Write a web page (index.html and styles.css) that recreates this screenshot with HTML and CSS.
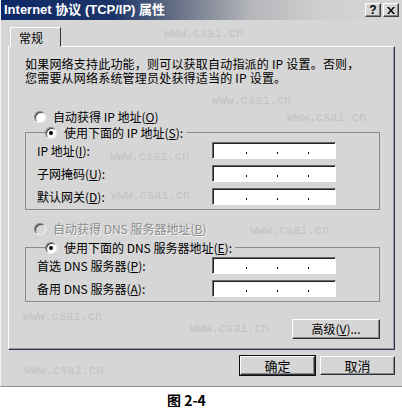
FILE: index.html
```html
<!DOCTYPE html>
<html lang="zh-CN">
<head>
    <meta charset="UTF-8">
    <title>Internet 协议 (TCP/IP) 属性</title>
    <link rel="stylesheet" href="styles.css">
</head>
<body>
    <div class="dialog">
        <div class="titlebar">
            <span class="title">Internet 协议 (TCP/IP) 属性</span>
            <div class="title-btns">
                <span class="title-btn">?</span>
                <span class="title-btn">
                    <svg width="8" height="7" viewBox="0 0 8 7"><path d="M0 0h2l2 2.5L6 0h2L5 3.5 8 7H6L4 4.5 2 7H0l3-3.5z" fill="#000"/></svg>
                </span>
            </div>
        </div>

        <div class="tabs">
            <div class="tab">常规</div>
        </div>

        <div class="panel">
            <div class="intro">
                <div>如果网络支持此功能，则可以获取自动指派的 IP 设置。否则，</div>
                <div>您需要从网络系统管理员处获得适当的 IP 设置。</div>
            </div>

            <div class="option first">
                <span class="radio"></span>
                <span>自动获得 IP 地址(<u>O</u>)</span>
            </div>

            <fieldset class="group">
                <legend class="option">
                    <span class="radio checked"></span>
                    <span>使用下面的 IP 地址(<u>S</u>):</span>
                </legend>
                <div class="rows">
                    <div class="row">
                        <span class="label">IP 地址(<u>I</u>):</span>
                        <div class="ipbox"><i></i><i></i><i></i></div>
                    </div>
                    <div class="row">
                        <span class="label">子网掩码(<u>U</u>):</span>
                        <div class="ipbox"><i></i><i></i><i></i></div>
                    </div>
                    <div class="row">
                        <span class="label">默认网关(<u>D</u>):</span>
                        <div class="ipbox"><i></i><i></i><i></i></div>
                    </div>
                </div>
            </fieldset>

            <div class="option second disabled">
                <span class="radio"></span>
                <span>自动获得 DNS 服务器地址(<u>B</u>)</span>
            </div>

            <fieldset class="group dns">
                <legend class="option">
                    <span class="radio checked"></span>
                    <span>使用下面的 DNS 服务器地址(<u>E</u>):</span>
                </legend>
                <div class="rows">
                    <div class="row">
                        <span class="label">首选 DNS 服务器(<u>P</u>):</span>
                        <div class="ipbox"><i></i><i></i><i></i></div>
                    </div>
                    <div class="row">
                        <span class="label">备用 DNS 服务器(<u>A</u>):</span>
                        <div class="ipbox"><i></i><i></i><i></i></div>
                    </div>
                </div>
            </fieldset>

            <div class="adv">
                <button class="btn adv-btn">高级(<u>V</u>)...</button>
            </div>
        </div>

        <div class="footer">
            <button class="btn default">确定</button>
            <button class="btn">取消</button>
        </div>

        <!-- watermark from the scanned figure -->
        <span class="mark" style="left:163px;top:27px">www.csai.cn</span>
        <span class="mark" style="left:211px;top:94px">www.csai.cn</span>
        <span class="mark" style="left:286px;top:111px">www.csai.cn</span>
        <span class="mark" style="left:109px;top:150px">www.csai.cn</span>
        <span class="mark" style="left:110px;top:189px">www.csai.cn</span>
        <span class="mark" style="left:249px;top:224px">www.csai.cn</span>
        <span class="mark" style="left:22px;top:310px">www.csai.cn</span>
        <span class="mark" style="left:189px;top:322px">www.csai.cn</span>
        <span class="mark" style="left:23px;top:364px">www.csai.cn</span>
    </div>
    <div class="caption">图 2-4</div>
</body>
</html>
```

FILE: styles.css
```css
body {
    margin: 0;
    background: #fff;
    font-family: "Noto Sans CJK SC", sans-serif;
    font-size: 12px;
    color: #000;
}
.dialog {
    position: relative;
    width: 402px;
    height: 387px;
    box-sizing: border-box;
    background: #d6d6d6;
    border-left: 1px solid #f2f2f2;
    border-bottom: 1px solid #8e8e8e;
}
.titlebar {
    height: 20px;
    display: flex;
    align-items: center;
    justify-content: space-between;
    padding: 0 3px 0 3px;
    background: linear-gradient(90deg, #0c2866 0, #1c3568 28%, #6c7488 45%, #b4b6ba 62%, #cfcfcf 80%, #d6d6d6 100%);
}
.title {
    color: #fff;
    font-family: "Liberation Sans", "Noto Sans CJK SC", sans-serif;
    font-weight: bold;
    font-size: 13px;
    line-height: 16px;
}
.title-btns {
    display: flex;
    gap: 2px;
}
.title-btn {
    width: 16px;
    height: 14px;
    box-sizing: border-box;
    display: flex;
    align-items: center;
    justify-content: center;
    background: #d6d6d6;
    border: 1px solid;
    border-color: #fff #404040 #404040 #fff;
    box-shadow: inset -1px -1px 0 #808080;
    font: bold 12px "Liberation Sans", sans-serif;
    line-height: 12px;
}
.tabs {
    display: flex;
    padding: 7px 0 0 9px;
}
.tab {
    position: relative;
    z-index: 1;
    width: 51px;
    height: 20px;
    box-sizing: border-box;
    margin-bottom: -1px;
    padding: 3px 0 0 8px;
    background: #d6d6d6;
    border: 1px solid;
    border-color: #fff #303040 transparent #fff;
    line-height: 14px;
}
.panel {
    width: 387px;
    margin-left: 7px;
    box-sizing: border-box;
    padding: 10px 14px 10px 16px;
    border: 1px solid;
    border-color: #fff #2a3450 #2a3450 #fff;
    box-shadow: inset -1px -1px 0 #9a9a9a;
}
.intro {
    line-height: 14px;
    letter-spacing: 0.2px;
    white-space: nowrap;
}
.option {
    display: flex;
    align-items: center;
    gap: 7px;
    height: 14px;
    line-height: 14px;
    padding-left: 9px;
}
.option.first {
    margin-top: 25px;
}
.option.second {
    margin-top: 12px;
}
.option.disabled {
    color: #8c8c8c;
    text-shadow: 1px 1px 0 #f4f4f4;
}
.radio {
    position: relative;
    width: 12px;
    height: 12px;
    box-sizing: border-box;
    border-radius: 50%;
    background: #fff;
    border: 1px solid;
    border-color: #808080 #f0f0f0 #f0f0f0 #808080;
    box-shadow: inset 1px 1px 0 #404040;
}
.disabled .radio {
    background: #d6d6d6;
}
.radio.checked::after {
    content: "";
    position: absolute;
    left: 3px;
    top: 3px;
    width: 4px;
    height: 4px;
    border-radius: 50%;
    background: #000;
}
.group {
    margin: 2px 0 0 0;
    padding: 0 0 4px 11px;
    min-width: 0;
    border: 1px solid #8a8a8a;
}
.group.dns {
    margin-top: 5px;
}
.group legend {
    margin-left: 8px;
    padding: 0 3px 0 0;
    height: 13px;
}
.rows {
    display: flex;
    flex-direction: column;
    gap: 6px;
    padding-top: 3px;
}
.row {
    display: flex;
    align-items: center;
    height: 17px;
}
.label {
    width: 175px;
    line-height: 14px;
}
.ipbox {
    width: 124px;
    height: 17px;
    box-sizing: border-box;
    display: flex;
    align-items: flex-end;
    gap: 30px;
    padding: 0 0 4px 33px;
    background: #fff;
    border: 1px solid;
    border-color: #6a6a6a #fff #fff #6a6a6a;
    box-shadow: inset 1px 1px 0 #1c2230;
}
.ipbox i {
    width: 1px;
    height: 2px;
    background: #000;
}
.adv {
    display: flex;
    justify-content: flex-end;
    margin-top: 17px;
}
.btn {
    height: 20px;
    box-sizing: border-box;
    padding: 0;
    background: #d6d6d6;
    font-family: "Noto Sans CJK SC", sans-serif;
    font-size: 12px;
    line-height: 16px;
    color: #000;
    border: 1px solid;
    border-color: #fff #2a3040 #2a3040 #fff;
    box-shadow: inset -1px -1px 0 #8a8a8a;
}
.adv-btn {
    width: 88px;
}
.footer {
    display: flex;
    justify-content: flex-end;
    gap: 5px;
    padding: 6px 7px 0 0;
}
.footer .btn {
    width: 75px;
    height: 19px;
    font-size: 13px;
}
.btn.default {
    outline: 1px solid #111;
}
.mark {
    position: absolute;
    font-family: "Liberation Mono", monospace;
    font-size: 12px;
    color: #c2c2c2;
    pointer-events: none;
}
.caption {
    margin-top: 6px;
    padding-left: 167px;
    font-weight: bold;
    font-size: 14px;
    line-height: 14px;
}
```
